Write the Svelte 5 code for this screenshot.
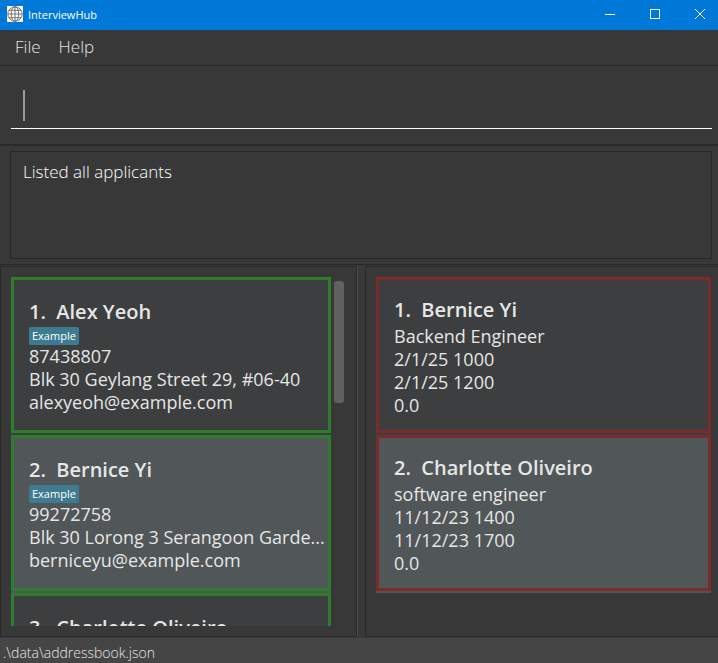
<script>
  const applicants = [
    { name: 'Alex Yeoh', tag: 'Example', lines: ['87438807', 'Blk 30 Geylang Street 29, #06-40', 'alexyeoh@example.com'] },
    { name: 'Bernice Yi', tag: 'Example', lines: ['99272758', 'Blk 30 Lorong 3 Serangoon Garde...', 'berniceyu@example.com'] },
    { name: 'Charlotte Oliveiro', tag: '', lines: [] }
  ];
  const interviews = [
    { name: 'Bernice Yi', lines: ['Backend Engineer', '2/1/25 1000', '2/1/25 1200', '0.0'] },
    { name: 'Charlotte Oliveiro', lines: ['software engineer', '11/12/23 1400', '11/12/23 1700', '0.0'] }
  ];
  let command = $state('');
</script>

<div class="window">
  <header class="titlebar">
    <svg class="logo" width="16" height="16" viewBox="0 0 16 16" fill="none" stroke="#555" stroke-width="0.8" aria-hidden="true">
      <rect width="16" height="16" fill="#fff" stroke="none" />
      <circle cx="8" cy="8" r="7.2" />
      <ellipse cx="8" cy="8" rx="3.8" ry="7.2" />
      <path d="M8 .8v14.4M.8 8h14.4M2 4.3h12M2 11.7h12" />
    </svg>
    <span class="title">InterviewHub</span>
    <button class="control" aria-label="Minimize">
      <svg width="10" height="10" viewBox="0 0 10 10" stroke="#fff" fill="none"><path d="M0 5.5h10" /></svg>
    </button>
    <button class="control" aria-label="Maximize">
      <svg width="10" height="10" viewBox="0 0 10 10" stroke="#fff" fill="none"><rect x=".5" y=".5" width="9" height="9" /></svg>
    </button>
    <button class="control" aria-label="Close">
      <svg width="10" height="10" viewBox="0 0 10 10" stroke="#fff" fill="none"><path d="M0 0l10 10M10 0L0 10" /></svg>
    </button>
  </header>

  <nav class="menubar">
    <button>File</button>
    <button>Help</button>
  </nav>

  <section class="command">
    <div class="field">
      <span class="caret"></span>
      <input type="text" aria-label="Command" bind:value={command} />
    </div>
  </section>

  <section class="result">
    <textarea readonly aria-label="Result">Listed all applicants</textarea>
  </section>

  <main class="panes">
    <section class="pane left">
      <ol class="list applicants">
        {#each applicants as person, i}
          <li>
            <article class="card">
              <h2>{i + 1}.&nbsp; {person.name}</h2>
              {#if person.tag}<span class="tag">{person.tag}</span>{/if}
              {#each person.lines as line}<p>{line}</p>{/each}
            </article>
          </li>
        {/each}
      </ol>
      <div class="scroll"><div class="thumb"></div></div>
    </section>
    <div class="divider"></div>
    <section class="pane right">
      <ol class="list interviews">
        {#each interviews as item, i}
          <li>
            <article class="card">
              <h2>{i + 1}.&nbsp; {item.name}</h2>
              {#each item.lines as line}<p>{line}</p>{/each}
            </article>
          </li>
        {/each}
      </ol>
    </section>
  </main>

  <footer>.\data\addressbook.json</footer>
</div>

<style>
  :global(body) {
    margin: 0;
    background: #383838;
  }
  .window {
    display: flex;
    flex-direction: column;
    height: 100vh;
    background: #383838;
    color: #e6e6e6;
    font-family: 'Open Sans', 'Noto Sans', sans-serif;
  }
  button,
  input,
  textarea {
    font: inherit;
    color: inherit;
    background: none;
    border: 0;
    padding: 0;
    margin: 0;
    outline: 0;
  }
  .titlebar {
    flex: none;
    display: flex;
    align-items: center;
    height: 28px;
    padding-bottom: 2px;
    background: #0078d7;
    color: #fff;
  }
  .logo {
    margin: 0 5px 0 7px;
  }
  .title {
    flex: 1;
    font-size: 11px;
  }
  .control {
    display: flex;
    align-items: center;
    justify-content: center;
    width: 45px;
    height: 28px;
  }
  .control:last-child {
    width: 46px;
    margin-right: -5px;
  }
  .menubar {
    flex: none;
    display: flex;
    gap: 18px;
    height: 33px;
    padding: 0 15px 2px;
    border-bottom: 1px solid #282828;
    font-size: 17px;
    font-weight: 300;
  }
  .command {
    flex: none;
    padding: 24px 6px 15px 11px;
    border-bottom: 2px solid #2a2a2a;
  }
  .field {
    display: flex;
    height: 38px;
    padding-left: 12px;
    border-bottom: 1px solid #fff;
  }
  .caret {
    width: 2px;
    height: 31px;
    background: #999;
  }
  .field input {
    flex: 1;
    min-width: 0;
    font-size: 18px;
  }
  .result {
    flex: none;
    display: flex;
    padding: 5px 6px 5px 10px;
    border-bottom: 1px solid #282828;
  }
  textarea {
    flex: 1;
    height: 90px;
    padding: 8px 12px;
    border: 1px solid #282828;
    resize: none;
    color: #fff;
    font-size: 17px;
    font-weight: 300;
    line-height: 23px;
  }
  .panes {
    flex: 1;
    min-height: 0;
    display: flex;
    margin: 1px 0;
  }
  .pane {
    flex: 1;
    display: flex;
    min-width: 0;
    box-sizing: border-box;
    border: 1px solid #282828;
    padding: 10px;
  }
  .right {
    padding-right: 7px;
    border-right: 0;
  }
  .divider {
    flex: none;
    width: 7px;
    border-left: 1px solid #4d4d4d;
  }
  .list {
    flex: 1;
    min-width: 0;
    margin: 0;
    padding: 0;
    list-style: none;
    overflow: hidden;
  }
  li {
    padding-bottom: 2px;
    background: #3c3e3f;
  }
  li:nth-child(even) {
    background: #515658;
  }
  .card {
    box-sizing: border-box;
    height: 156px;
    border: 3px solid #2d7d2d;
    padding: 20px 0 0 15px;
  }
  .interviews .card {
    border-color: #7b2b2b;
    padding-top: 18px;
  }
  h2 {
    margin: 0 0 4px;
    font-size: 20px;
    font-weight: 600;
    line-height: 23px;
    white-space: pre;
  }
  p {
    margin: 0;
    font-size: 18px;
    line-height: 23px;
    white-space: nowrap;
  }
  .tag {
    display: block;
    width: max-content;
    padding: 0 3px;
    border-radius: 2px;
    background: #3e7b91;
    color: #fff;
    font-size: 11px;
    line-height: 18px;
  }
  .scroll {
    flex: none;
    width: 12px;
    padding: 4px 0 0 3px;
  }
  .thumb {
    width: 10px;
    height: 122px;
    border-radius: 3px;
    background: #616161;
  }
  footer {
    flex: none;
    height: 25px;
    padding-left: 3px;
    background: #454545;
    font-size: 14px;
    font-weight: 300;
    line-height: 29px;
  }
</style>
